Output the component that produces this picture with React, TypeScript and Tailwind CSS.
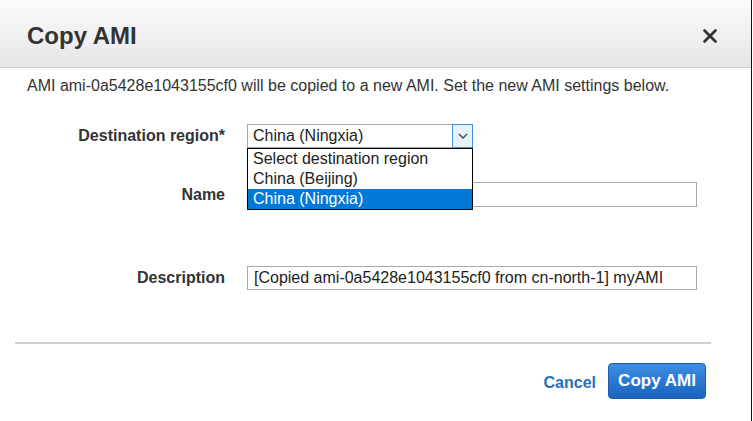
import { X } from "lucide-react"

const font = "font-['Liberation_Sans',Arial,sans-serif]"

const regions = ["Select destination region", "China (Beijing)", "China (Ningxia)"]

function FieldRow({ label, top, children }: { label: string; top: string; children: React.ReactNode }) {
  return (
    <div className={`grid grid-cols-[225px_1fr] gap-x-[22px] items-center ${top}`}>
      <div className="text-right text-[16px] font-bold text-[#333] leading-[20px]">{label}</div>
      <div>{children}</div>
    </div>
  )
}

export default function App() {
  return (
    <div className={`w-[753px] h-[421px] bg-white overflow-hidden ${font}`}>
      <div className="w-[752px] h-[421px] border-r border-[#111] flex flex-col">
        {/* header */}
        <div className="h-[68px] shrink-0 flex items-center justify-between pl-[27px] pr-[30px] pt-[4px] bg-gradient-to-b from-[#fbfbfb] to-[#e6e6e6] border-b border-[#cfcfcf]">
          <h1 className="text-[24px] font-bold text-[#333] leading-none">Copy AMI</h1>
          <X className="w-[22px] h-[22px] text-[#333]" strokeWidth={3} />
        </div>

        <p className="mt-[8px] pl-[27px] text-[16px] leading-[20px] text-[#333]">
          AMI ami-0a5428e1043155cf0 will be copied to a new AMI. Set the new AMI settings below.
        </p>

        <FieldRow label="Destination region*" top="mt-[28px]">
          <div className="relative w-[226px]">
            <div className="h-[24px] border border-[#a9a9a9] flex items-center">
              <span className="flex-1 pl-[5px] text-[16px] text-[#222] leading-none">China (Ningxia)</span>
              <span className="w-[21px] h-[24px] -mr-px -my-px border border-[#3c8ddd] bg-[#e5f1fb] flex items-center justify-center">
                <svg width="10" height="6" viewBox="0 0 10 6" className="text-[#444]">
                  <path d="M1 1l4 4 4-4" fill="none" stroke="currentColor" strokeWidth="1.4" />
                </svg>
              </span>
            </div>
            <ul className="absolute left-0 top-[24px] w-[226px] bg-white border border-black z-10">
              {regions.map((r, i) => (
                <li
                  key={r}
                  className={`h-[20px] pl-[5px] text-[16px] leading-[20px] ${
                    i === 2 ? "bg-[#0078d7] text-white" : "text-[#222]"
                  }`}
                >
                  {r}
                </li>
              ))}
            </ul>
          </div>
        </FieldRow>

        <FieldRow label="Name" top="mt-[34px]">
          <div className="w-[450px] h-[25px] border border-[#a9a9a9]" />
        </FieldRow>

        <FieldRow label="Description" top="mt-[59px]">
          <div className="w-[450px] h-[24px] border border-[#a9a9a9] flex items-center pl-[6px] text-[16px] text-[#222]">
            [Copied ami-0a5428e1043155cf0 from cn-north-1] myAMI
          </div>
        </FieldRow>

        <div className="mt-[52px] ml-[15px] w-[696px] h-[2px] bg-[#d0d0d0]" />

        <div className="mt-[19px] flex items-center justify-end pr-[45px] gap-[12px]">
          <button className="text-[16px] font-bold text-[#1e73be] mt-[4px]">Cancel</button>
          <button className="w-[98px] h-[36px] rounded-[4px] border border-[#1d5fae] bg-gradient-to-b from-[#3b8fe3] to-[#1a63bd] text-white text-[17px] font-bold">
            Copy AMI
          </button>
        </div>
      </div>
    </div>
  )
}
